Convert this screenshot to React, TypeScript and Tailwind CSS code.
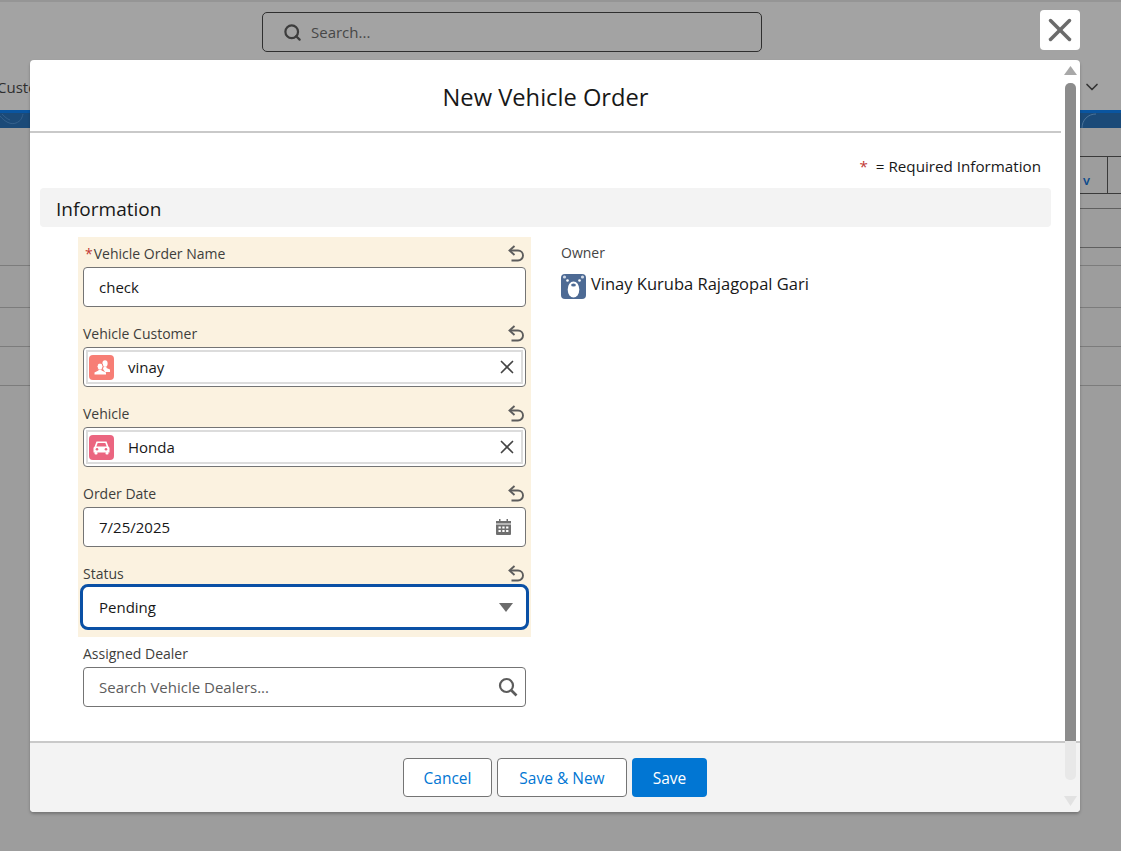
import { ChevronDown, Search, X } from 'lucide-react';

function UndoIcon() {
  return (
    <svg width="16" height="17" viewBox="0 0 16 17" fill="none" stroke="#5c5c5c" strokeWidth="1.9">
      <path d="M6.500 1 1.500 5.500 6.500 10" />
      <path d="M2 5.500h8a5 5 0 0 1 0 10H3.500" />
    </svg>
  );
}

function CustomerIcon() {
  return (
    <svg width="25" height="25" viewBox="0 0 25 25">
      <rect width="25" height="25" rx="4" fill="#f77e75" />
      <ellipse cx="16" cy="8.500" rx="2.600" ry="3.200" fill="#fff" />
      <path d="M14.500 11.500h3v1.500l3.500 1.500v2.500h-5l-2-3z" fill="#fff" />
      <ellipse cx="11" cy="11.500" rx="3" ry="3.500" fill="#fff" stroke="#f77e75" />
      <path d="M5.500 19.500v-2l4-2v-1h3v1l4.500 2v2z" fill="#fff" />
    </svg>
  );
}

function CarIcon() {
  return (
    <svg width="25" height="25" viewBox="0 0 25 25">
      <rect width="25" height="25" rx="4" fill="#eb6580" />
      <path d="M7.500 6.500h10l2 5.200c.8.400 1 1 1 1.600v4.200h-16v-4.200c0-.6.200-1.200 1-1.600z" fill="#fff" />
      <path d="M8.700 8h7.600l1.300 3.500H7.400z" fill="#eb6580" />
      <rect x="5.500" y="17" width="3" height="2.500" rx="1" fill="#fff" />
      <rect x="16.500" y="17" width="3" height="2.500" rx="1" fill="#fff" />
      <circle cx="8" cy="14.200" r="1.300" fill="#eb6580" />
      <circle cx="17" cy="14.200" r="1.300" fill="#eb6580" />
    </svg>
  );
}

function BearAvatar() {
  return (
    <svg width="25" height="25" viewBox="0 0 25 25">
      <rect width="25" height="25" rx="4" fill="#4d6a94" />
      <circle cx="3.500" cy="3" r="1.600" fill="#cfd8e6" />
      <circle cx="21.500" cy="3" r="1.600" fill="#cfd8e6" />
      <circle cx="6.500" cy="6.500" r="1.300" fill="#fff" />
      <circle cx="18.500" cy="6.500" r="1.300" fill="#fff" />
      <ellipse cx="12.500" cy="15.500" rx="5.800" ry="8" fill="#fff" />
      <ellipse cx="12.500" cy="11" rx="2.400" ry="1.500" fill="#4d6a94" />
    </svg>
  );
}

function CalendarIcon() {
  return (
    <svg width="15" height="16" viewBox="0 0 15 16" fill="#6f6f6f">
      <rect x="3" y="0" width="1.500" height="3" />
      <rect x="10.500" y="0" width="1.500" height="3" />
      <rect x="0" y="2" width="15" height="2.500" />
      <path d="M0 5.500h15v9.500a1 1 0 0 1-1 1h-13a1 1 0 0 1-1-1z" />
      <g fill="#fff">
        <rect x="2.500" y="7.500" width="2.300" height="2" />
        <rect x="6.300" y="7.500" width="2.300" height="2" />
        <rect x="10.100" y="7.500" width="2.300" height="2" />
        <rect x="2.500" y="11" width="2.300" height="2" />
        <rect x="6.300" y="11" width="2.300" height="2" />
        <rect x="10.100" y="11" width="2.300" height="2" />
      </g>
    </svg>
  );
}

function Field({
  label,
  required,
  undo = true,
  children,
}: {
  label: string;
  required?: boolean;
  undo?: boolean;
  children: React.ReactNode;
}) {
  return (
    <div className="h-[80px] px-[5px]">
      <div className="flex h-[30px] items-center justify-between pt-[3px] text-[14px] text-[#3e3e3c]">
        <span>
          {required && <span className="ml-[2px] mr-[1px] text-[#c23934]">*</span>}
          {label}
        </span>
        {undo && (
          <span className="mb-[1px] mr-[2px] flex">
            <UndoIcon />
          </span>
        )}
      </div>
      {children}
    </div>
  );
}

function TextBox({ children, icon }: { children: React.ReactNode; icon?: React.ReactNode }) {
  return (
    <div className="flex h-[40px] items-center justify-between rounded-[4px] border border-[#747474] bg-white pl-[15px] pr-[14px] text-[15px] text-[#181818]">
      {children}
      {icon}
    </div>
  );
}

function PillBox({ icon, text }: { icon: React.ReactNode; text: string }) {
  return (
    <div className="h-[40px] rounded-[4px] border border-[#747474] bg-white p-[2px]">
      <div className="flex h-full items-center gap-[14px] border-2 border-[#dcdcdc] pl-[1px] pr-[3px] text-[15px] text-[#181818]">
        {icon}
        <span className="flex-1">{text}</span>
        <X size={22} color="#444" strokeWidth={1.8} />
      </div>
    </div>
  );
}

function BackgroundPage() {
  return (
    <div className="h-full bg-[#9d9d9d] text-[#2e2e2e]">
      <div className="h-[64px] border-t-2 border-[#959595] bg-[#a3a3a3] pl-[262px] pt-[10px]">
        <div className="flex h-[40px] w-[500px] items-center gap-[9px] rounded-[5px] border border-[#2f2f2f] pl-[20px] text-[15px] text-[#474747]">
          <Search size={19} color="#3d3d3d" strokeWidth={2.8} />
          Search...
        </div>
      </div>
      <div className="flex h-[46px] items-center justify-between bg-[#a3a3a3] pr-[19px] text-[15px]">
        <span className="-ml-[3px]">Custo</span>
        <ChevronDown size={20} color="#333" />
      </div>
      <div className="flex h-[18px] justify-between border-t-[3px] border-[#0a55a0] bg-[#1b4a78]">
        <svg width="30" height="15" viewBox="0 0 30 15" fill="none" stroke="#34608c" strokeWidth="1">
          <path d="M0 3c5 6 11 9 16 7s6-5 7-9" />
          <path d="M2 1c3 3 5 5 8 6" />
        </svg>
        <svg width="40" height="15" viewBox="0 0 40 15" fill="none" stroke="#4b7399" strokeWidth="1">
          <path d="M1 15C1 7 7 1 15 1" />
        </svg>
      </div>
      <div className="h-[28px]" />
      <div className="ml-auto flex h-[38px] w-[41px] border-y border-[#3a3a3a] pt-[14px] text-[13px] font-semibold text-[#0a4a8c]">
        <span className="w-[27px] pl-[3px]">v</span>
        <span className="-mt-[14px] h-[37px] border-l border-[#3a3a3a]" />
      </div>
      <div className="ml-auto h-[15px] w-[41px] border-b border-[#5f5f5f]" />
      <div className="ml-auto h-[39px] w-[41px] border-b border-[#5f5f5f]" />
      <div className="h-[18px] border-b border-[#7c7c7c]" />
      <div className="h-[42px] border-b border-[#7c7c7c]" />
      <div className="h-[39px] border-b border-[#7c7c7c]" />
      <div className="h-[39px] border-b border-[#7c7c7c]" />
    </div>
  );
}

export default function App() {
  return (
    <div className="relative h-[851px] w-[1121px] overflow-hidden font-['Open_Sans',sans-serif]">
      <BackgroundPage />

      <button className="absolute left-[1040px] top-[10px] flex h-[40px] w-[40px] items-center justify-center rounded-[4px] bg-white">
        <X size={38} color="#6b6b6b" strokeWidth={2.2} className="shrink-0" />
      </button>

      <div className="absolute left-[30px] top-[60px] flex h-[752px] w-[1050px] flex-col rounded-[4px] bg-white shadow-[0_2px_3px_rgba(0,0,0,0.25)]">
        <div className="mr-[19px] flex h-[73px] shrink-0 items-center justify-center border-b-2 border-[#c9c9c9] pt-[5px] text-[23.7px] text-[#181818]">
          New Vehicle Order
        </div>

        <div className="flex-1 pl-[10px] pr-[29px]">
          <div className="flex h-[55px] items-center justify-end pr-[10px] pt-[12px] text-[15.2px] text-[#181818]">
            <span className="mr-[8px] text-[#c23934]">*</span>= Required Information
          </div>
          <div className="flex h-[39px] items-center rounded-[4px] bg-[#f3f3f3] pl-[16px] pt-[3px] text-[19px] text-[#181818]">
            Information
          </div>

          <div className="mt-[10px] flex pl-[38px]">
            <div className="w-[453px]">
              <div className="bg-[#fbf2e0]">
                <Field label="Vehicle Order Name" required>
                  <TextBox>check</TextBox>
                </Field>
                <Field label="Vehicle Customer">
                  <PillBox icon={<CustomerIcon />} text="vinay" />
                </Field>
                <Field label="Vehicle">
                  <PillBox icon={<CarIcon />} text="Honda" />
                </Field>
                <Field label="Order Date">
                  <TextBox icon={<CalendarIcon />}>7/25/2025</TextBox>
                </Field>
                <Field label="Status">
                  <div className="flex h-[40px] items-center justify-between rounded-[5px] bg-white pl-[16px] pr-[13px] text-[15px] text-[#181818] outline-[3px] outline-[#0a50a5]">
                    Pending
                    <svg width="14" height="9" viewBox="0 0 14 9">
                      <path d="M0 0h14L7 9z" fill="#6b6b6b" />
                    </svg>
                  </div>
                </Field>
              </div>
              <Field label="Assigned Dealer" undo={false}>
                <div className="flex h-[40px] items-center justify-between rounded-[4px] border border-[#747474] bg-white pl-[15px] pr-[7px] text-[15px] text-[#5c5c5c]">
                  Search Vehicle Dealers...
                  <svg width="20" height="20" viewBox="0 0 20 20" fill="none" stroke="#5c5c5c">
                    <circle cx="8.500" cy="8.500" r="6.500" strokeWidth="2.200" />
                    <path d="m13.500 13.500 5 5" strokeWidth="2.600" />
                  </svg>
                </div>
              </Field>
            </div>

            <div className="pl-[30px] pt-[5px]">
              <div className="text-[14px] text-[#444]">Owner</div>
              <div className="mt-[9px] flex items-center gap-[5px] text-[16.5px] text-[#181818]">
                <BearAvatar />
                <span className="pb-[5px]">Vinay Kuruba Rajagopal Gari</span>
              </div>
            </div>
          </div>
        </div>

        <div className="flex h-[71px] shrink-0 items-start justify-center gap-[5px] rounded-b-[4px] border-t-2 border-[#c9c9c9] bg-[#f3f3f3] pt-[15px] text-[15.5px]">
          <button className="h-[39px] w-[89px] rounded-[4px] border border-[#747474] bg-white pt-[2px] text-[#0176d3]">Cancel</button>
          <button className="h-[39px] w-[130px] rounded-[4px] border border-[#747474] bg-white pt-[2px] text-[#0176d3]">Save &amp; New</button>
          <button className="h-[39px] w-[75px] rounded-[4px] bg-[#0176d3] pt-[2px] text-white">Save</button>
        </div>

        {/* scrollbar */}
        <div className="absolute right-[4px] top-[5px] flex h-[742px] w-[11px] flex-col items-center">
          <svg width="13" height="10" viewBox="0 0 13 10" className="shrink-0">
            <path d="M6.500 1 13 10H0z" fill="#a8a8a8" />
          </svg>
          <div className="mt-[8px] h-[697px] w-full shrink-0 rounded-[5px] bg-[linear-gradient(#8c8c8c_0,#8c8c8c_658px,#e8e8e8_658px)]" />
          <svg width="13" height="10" viewBox="0 0 13 10" className="mt-[16px] shrink-0">
            <path d="M0 0h13L6.500 10z" fill="#e2e2e2" />
          </svg>
        </div>
      </div>
    </div>
  );
}
